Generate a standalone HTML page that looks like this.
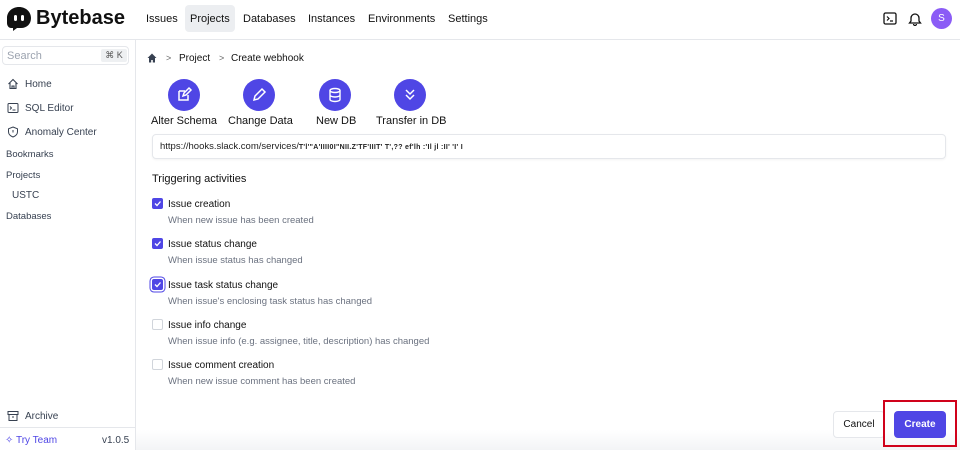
<!DOCTYPE html>
<html><head><style>
*{box-sizing:border-box;margin:0;padding:0}
body{width:960px;height:450px;overflow:hidden;background:#fff;font-family:"Liberation Sans",sans-serif;color:#1f2937;position:relative;font-size:10px}
.a{position:absolute;white-space:nowrap}
.hdr{position:absolute;left:0;top:0;width:960px;height:40px;border-bottom:1px solid #e5e7eb}
.nav{font-size:11px;color:#111}
.side{position:absolute;left:0;top:40px;width:136px;height:410px;border-right:1px solid #e5e7eb}
.si{font-size:10px;color:#374151}
.circ{position:absolute;width:32px;height:32px;border-radius:50%;background:#4f46e5;top:79px}
.cb{position:absolute;left:152px;width:11px;height:11px;border-radius:2px;background:#4f46e5}
.cb.off{background:#fff;border:1px solid #d1d5db}
.t{font-size:10px;color:#111}
.d{font-size:9.5px;color:#6b7280}
</style></head><body>
<div class="hdr"></div>
<svg class="a" style="left:6px;top:6px" width="26" height="26" viewBox="0 0 26 26"><path d="M13 1C6 1 1 6 1 12v5c0 3 2 5 4 5h2v3l4-3h4c6 0 10-4 10-10S20 1 13 1z" fill="#111"/><rect x="8" y="9" width="3" height="6" rx="1.5" fill="#fff"/><rect x="15" y="9" width="3" height="6" rx="1.5" fill="#fff"/></svg>
<div class="a" style="left:36px;top:7px;font-size:20px;font-weight:bold;color:#111">Bytebase</div>
<div class="a" style="left:185px;top:5px;width:50px;height:27px;background:#eceef1;border-radius:4px"></div>
<div class="a nav" style="left:146px;top:13px">Issues</div>
<div class="a nav" style="left:190px;top:13px">Projects</div>
<div class="a nav" style="left:243px;top:13px">Databases</div>
<div class="a nav" style="left:308px;top:13px">Instances</div>
<div class="a nav" style="left:368px;top:13px">Environments</div>
<div class="a nav" style="left:448px;top:13px">Settings</div>
<svg class="a" style="left:883px;top:12px" width="14" height="13"><rect x="1" y="1" width="12" height="11" rx="1.5" fill="none" stroke="#111" stroke-width="1.3"/><path d="M4 4.5l2 2-2 2M7 9h3" stroke="#111" fill="none" stroke-width="1.2"/></svg>
<svg class="a" style="left:908px;top:11px" width="14" height="15"><path d="M3 10V7a4 4 0 018 0v3l1.5 2h-11z" fill="none" stroke="#111" stroke-width="1.3"/><path d="M5.5 13a1.5 1.5 0 003 0" fill="none" stroke="#111" stroke-width="1.2"/></svg>
<div class="a" style="left:931px;top:8px;width:21px;height:21px;border-radius:50%;background:#8b5cf6;color:#fff;font-size:10px;text-align:center;line-height:21px">S</div>

<div class="side"></div>
<div class="a" style="left:2px;top:46px;width:127px;height:19px;border:1px solid #e5e7eb;border-radius:4px"></div>
<div class="a" style="left:7px;top:50px;font-size:11px;color:#9ca3af">Search</div>
<div class="a" style="left:101px;top:49px;width:26px;height:13px;background:#eef0f2;border-radius:2px;font-size:9px;color:#555;text-align:center;line-height:13px">⌘ K</div>
<svg class="a" style="left:7px;top:78px" width="12" height="12"><path d="M1.5 6L6 1.5 10.5 6M3 5v5.5h6V5M5 10.5V8h2v2.5" fill="none" stroke="#374151" stroke-width="1.1"/></svg>
<div class="a si" style="left:25px;top:79px">Home</div>
<svg class="a" style="left:7px;top:102px" width="12" height="12"><rect x="1" y="1.5" width="10" height="9" rx="1" fill="none" stroke="#374151" stroke-width="1"/><path d="M3 4.5l1.5 1.5L3 7.5M5.5 8h3" stroke="#374151" fill="none"/></svg>
<div class="a si" style="left:25px;top:103px">SQL Editor</div>
<svg class="a" style="left:7px;top:126px" width="12" height="12"><path d="M6 1l4.5 1.8v3c0 2.7-2 4.3-4.5 5.2C3.5 10.1 1.5 8.5 1.5 5.8v-3z" fill="none" stroke="#374151" stroke-width="1"/><path d="M6 4v2.5" stroke="#374151"/></svg>
<div class="a si" style="left:25px;top:127px">Anomaly Center</div>
<div class="a si" style="left:6px;top:149px;font-size:9.5px">Bookmarks</div>
<div class="a si" style="left:6px;top:170px;font-size:9.5px">Projects</div>
<div class="a si" style="left:12px;top:190px">USTC</div>
<div class="a si" style="left:6px;top:211px;font-size:9.5px">Databases</div>
<svg class="a" style="left:7px;top:410px" width="12" height="12"><rect x="1" y="1.5" width="10" height="3" fill="none" stroke="#374151"/><path d="M2 4.5v6h8v-6M5 7h2" fill="none" stroke="#374151"/></svg>
<div class="a si" style="left:25px;top:411px">Archive</div>
<div class="a" style="left:0;top:427px;width:136px;border-top:1px solid #e5e7eb"></div>
<div class="a" style="left:5px;top:435px;font-size:10px;color:#4f46e5">✧ Try Team</div>
<div class="a" style="left:102px;top:435px;font-size:10px;color:#374151">v1.0.5</div>

<svg class="a" style="left:147px;top:53px" width="10" height="10"><path d="M5 0.5L0.5 5h1.5v4.5h2.2V7h1.6v2.5H8V5h1.5z" fill="#374151"/></svg>
<div class="a" style="left:166px;top:53px;font-size:9px;color:#666">&gt;</div>
<div class="a" style="left:179px;top:53px;font-size:10px;color:#111">Project</div>
<div class="a" style="left:219px;top:53px;font-size:9px;color:#666">&gt;</div>
<div class="a" style="left:231px;top:53px;font-size:10px;color:#111">Create webhook</div>

<div class="circ" style="left:168px"><svg width="32" height="32"><path d="M11 12h6M11 12v9h9v-5" fill="none" stroke="#fff" stroke-width="1.5"/><path d="M15 17l1-3 5-5 2 2-5 5z" fill="none" stroke="#fff" stroke-width="1.5"/></svg></div>
<div class="circ" style="left:243px"><svg width="32" height="32"><path d="M11 21l1-4 7-7 3 3-7 7z" fill="none" stroke="#fff" stroke-width="1.5"/></svg></div>
<div class="circ" style="left:319px"><svg width="32" height="32"><ellipse cx="16" cy="11.5" rx="5" ry="2" fill="none" stroke="#fff" stroke-width="1.4"/><path d="M11 11.5v9c0 1.1 2.2 2 5 2s5-.9 5-2v-9M11 16c0 1.1 2.2 2 5 2s5-.9 5-2" fill="none" stroke="#fff" stroke-width="1.4"/></svg></div>
<div class="circ" style="left:394px"><svg width="32" height="32"><path d="M12 11l4 4 4-4M12 16l4 4 4-4" fill="none" stroke="#fff" stroke-width="1.5"/></svg></div>
<div class="a" style="left:151px;top:115px;font-size:11px;color:#111">Alter Schema</div>
<div class="a" style="left:228px;top:115px;font-size:11px;color:#111">Change Data</div>
<div class="a" style="left:316px;top:115px;font-size:11px;color:#111">New DB</div>
<div class="a" style="left:376px;top:115px;font-size:11px;color:#111">Transfer in DB</div>

<div class="a" style="left:152px;top:134px;width:794px;height:25px;border:1px solid #e5e7eb;border-radius:4px;box-shadow:0 1px 2px rgba(0,0,0,.05)"></div>
<div class="a" style="left:160px;top:141px;font-size:9.5px;color:#222">https://hooks.slack.com/services/<span style="font-size:7px;letter-spacing:0.3px;font-weight:bold">T'l'"A'IIII0I"NII.Z'TF'IIIT'  T',?? ef'lh  :'Il  jl  :II'    'I' I</span></div>
<div class="a" style="left:152px;top:173px;font-size:11px;color:#111">Triggering activities</div>

<div class="cb" style="top:198px"></div><div class="a t" style="left:168px;top:199px">Issue creation</div><div class="a d" style="left:168px;top:215px">When new issue has been created</div>
<div class="cb" style="top:238px"></div><div class="a t" style="left:168px;top:239px">Issue status change</div><div class="a d" style="left:168px;top:255px">When issue status has changed</div>
<div class="cb" style="top:279px;box-shadow:0 0 0 1.5px #fff,0 0 0 2.5px #4f46e5"></div><div class="a t" style="left:168px;top:280px">Issue task status change</div><div class="a d" style="left:168px;top:296px">When issue's enclosing task status has changed</div>
<div class="cb off" style="top:319px"></div><div class="a t" style="left:168px;top:320px">Issue info change</div><div class="a d" style="left:168px;top:336px">When issue info (e.g. assignee, title, description) has changed</div>
<div class="cb off" style="top:359px"></div><div class="a t" style="left:168px;top:360px">Issue comment creation</div><div class="a d" style="left:168px;top:376px">When new issue comment has been created</div>
<svg class="a" style="left:152px;top:198px" width="11" height="100"><path d="M3 5.5l2 2 3.5-4M3 45.5l2 2 3.5-4M3 86.5l2 2 3.5-4" fill="none" stroke="#fff" stroke-width="1.3"/></svg>

<div class="a" style="left:136px;top:430px;width:824px;height:20px;background:linear-gradient(#fff,#f3f4f6)"></div>
<div class="a" style="left:833px;top:411px;width:52px;height:27px;border:1px solid #e5e7eb;border-radius:4px;background:#fff;font-size:10px;text-align:center;line-height:25px;color:#111">Cancel</div>
<div class="a" style="left:883px;top:400px;width:74px;height:47px;border:2px solid #d0021b"></div>
<div class="a" style="left:894px;top:411px;width:52px;height:27px;border-radius:4px;background:#4f46e5;color:#fff;font-size:10px;text-align:center;line-height:27px;font-weight:bold">Create</div>
</body></html>
